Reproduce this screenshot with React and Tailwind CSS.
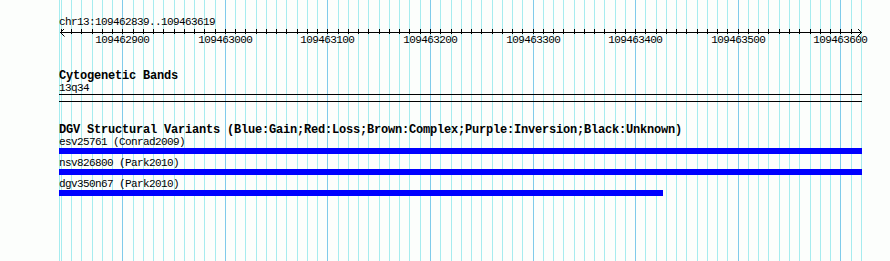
import React from "react";

// genomic coordinate -> pixel x on the 890px panel
const toX = (bp) => 122.3 + (bp - 109462900) * 1.0257;

const minorTicks = [];
for (let bp = 109462840; bp <= 109463620; bp += 10) minorTicks.push(bp);
const majorTicks = [];
for (let bp = 109462900; bp <= 109463600; bp += 100) majorTicks.push(bp);

const features = [
  { name: "esv25761", source: "Conrad2009", width: 803 },
  { name: "nsv826800", source: "Park2010", width: 803 },
  { name: "dgv350n67", source: "Park2010", width: 604 },
];

const Grid = () => (
  <svg className="absolute inset-0 pointer-events-none" width="890" height="261">
    <rect x="59" y="0" width="1" height="261" fill="#a6ecef" shapeRendering="crispEdges" />
    {minorTicks.map((bp) => (
      <rect
        key={bp}
        x={Math.round(toX(bp))}
        y="0"
        width="1"
        height="261"
        shapeRendering="crispEdges"
        fill={bp % 100 === 0 ? "#7fcbea" : "#a6ecef"}
      />
    ))}
  </svg>
);

const Ruler = () => (
  <div className="relative h-[17px]">
    <svg width="890" height="9" className="block">
      <rect x="60" y="3" width="802" height="1" fill="#000" shapeRendering="crispEdges" />
      {minorTicks
        .filter((bp) => bp < 109463619)
        .map((bp) => (
          <rect
            key={bp}
            x={Math.round(toX(bp))}
            y="0"
            width="1"
            height="5"
            fill="#000"
            shapeRendering="crispEdges"
          />
        ))}
      <path d="M64.5 -0.5 L60.5 3.5 L64.5 7.5" stroke="#000" fill="none" strokeWidth="1" />
      <path d="M857.5 -0.5 L861.5 3.5 L857.5 7.5" stroke="#000" fill="none" strokeWidth="1" />
    </svg>
    {majorTicks.map((bp) => (
      <span
        key={bp}
        className="absolute top-[6px] w-[60px] text-center text-[11px] leading-[11px] tracking-[-0.6px]"
        style={{ left: Math.round(toX(bp)) - 30 + 0.3 }}
      >
        {bp}
      </span>
    ))}
  </div>
);

const App = () => {
  return (
    <div className="relative w-[890px] h-[261px] overflow-hidden bg-[#fcfefc] text-black font-['Liberation_Mono',monospace]">
      <Grid />

      <div className="relative">
        {/* Ruler */}
        <div className="ml-[59px] pt-[16px] text-[11px] leading-[13px] tracking-[-0.6px]">
          chr13:109462839..109463619
        </div>
        <Ruler />

        {/* Cytogenetic Bands */}
        <div className="ml-[59px] w-[803px] mt-[23px]">
          <div className="font-bold text-[12px] leading-[14px] tracking-[-0.2px]">
            Cytogenetic Bands
          </div>
          <div className="text-[11px] leading-[11px] tracking-[-0.6px]">13q34</div>
          <div className="h-px bg-black" />
          <div className="h-px bg-black mt-[6px]" />
        </div>

        {/* DGV track */}
        <div className="ml-[59px] w-[803px] mt-[22px]">
          <div className="font-bold text-[12px] leading-[13px] tracking-[-0.2px] whitespace-nowrap">
            DGV Structural Variants (Blue:Gain;Red:Loss;Brown:Complex;Purple:Inversion;Black:Unknown)
          </div>
          <div className="flex flex-col gap-[4px]">
            {features.map((f) => (
              <div key={f.name}>
                <div className="text-[11px] leading-[11px] tracking-[-0.6px] whitespace-nowrap">
                  {f.name} ({f.source})
                </div>
                <div className="h-[6px] bg-[#0000ff]" style={{ width: f.width }} />
              </div>
            ))}
          </div>
        </div>
      </div>
    </div>
  );
};

export default App;
